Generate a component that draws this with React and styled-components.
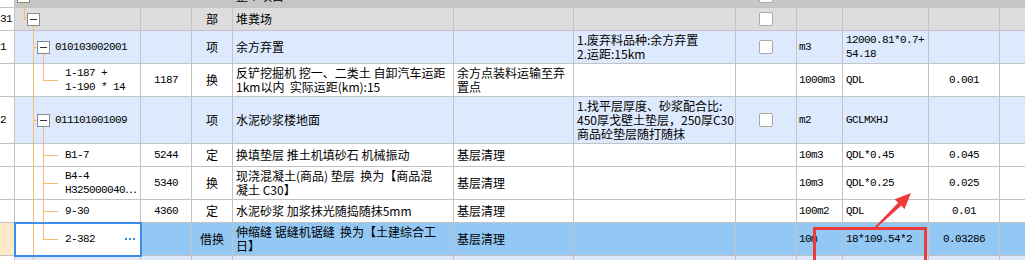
import React from 'react';
import styled, { css, createGlobalStyle } from 'styled-components';

const GlobalStyle = createGlobalStyle`
  html, body {
    margin: 0;
    padding: 0;
    background: #fff;
  }
  body {
    overflow: hidden;
  }
`;

const ORANGE = '#f5bd74';
const LINE = '#c3c3c3';
const COLS = '15px 126px 51px 41px 221px 120px 162px 61px 46px 86px 71px 80px';

const tones = {
  top: '#c6c6c6',
  group: '#dddddd',
  item: '#dde9fc',
  plain: '#ffffff',
  selected: '#93c8f5',
};

// 树形连接线，坐标相对编码单元格左边
const full = x => `linear-gradient(${ORANGE},${ORANGE}) ${x}px 0 / 1px 100% no-repeat`;
const upper = x => `linear-gradient(${ORANGE},${ORANGE}) ${x}px 0 / 1px 50% no-repeat`;
const lower = x => `linear-gradient(${ORANGE},${ORANGE}) ${x}px 100% / 1px 50% no-repeat`;
const elbow = (x, w) => `linear-gradient(${ORANGE},${ORANGE}) ${x}px 50% / ${w}px 1px no-repeat`;

const trees = {
  top: { bg: [lower(8)], indent: 2 },
  group: { bg: [upper(9), elbow(9, 3), lower(18)], indent: 12 },
  item: { bg: [full(18), elbow(18, 4), lower(28)], indent: 22 },
  child: { bg: [full(18), full(28), elbow(28, 15)], indent: 50 },
  last: { bg: [full(18), upper(28), elbow(28, 15)], indent: 50 },
  next: { bg: [full(18)], indent: 50 },
};

const mono = css`
  font-family: "Liberation Mono", "Noto Sans CJK SC", monospace;
  font-size: 11px;
  letter-spacing: -0.6px;
`;

const Viewport = styled.div`
  position: relative;
  width: 1025px;
  height: 260px;
  overflow: hidden;
`;

const Grid = styled.div`
  margin-top: -15px;
  font-family: "Noto Sans CJK SC", sans-serif;
  font-size: 12px;
  line-height: 14px;
  color: #000;
`;

const Row = styled.div`
  display: grid;
  grid-template-columns: ${COLS};
  height: ${p => p.$h}px;
  background: ${p => tones[p.$tone]};
`;

const Cell = styled.div`
  box-sizing: border-box;
  display: flex;
  align-items: ${p => (p.$top ? 'flex-start' : 'center')};
  justify-content: ${p => (p.$center ? 'center' : 'flex-start')};
  padding: ${p => (p.$top ? '3px' : '0')} ${p => p.$pad ?? 3}px 0;
  border-right: 1px solid ${LINE};
  border-bottom: 1px solid ${LINE};
  overflow: hidden;
  white-space: pre;
  ${p => p.$mono && mono}
`;

const NumCell = styled(Cell)`
  ${mono}
  padding: 0;
  background: ${p => (p.$active ? '#fde8c8' : '#fff')};
`;

const CodeCell = styled(Cell)`
  ${mono}
  gap: 5px;
  padding: 0 0 0 ${p => trees[p.$tree].indent}px;
  background: ${p => trees[p.$tree].bg.join(', ')};
  background-color: ${p => (p.$active ? '#fff' : 'transparent')};
  ${p => p.$active && css`
    position: relative;
    z-index: 1;
    outline: 2px solid #3b8fea;
    outline-offset: -1px;
  `}
`;

const Text = styled.span`
  display: block;
  white-space: pre;
`;

const Toggle = styled.span`
  box-sizing: border-box;
  flex: none;
  width: 13px;
  height: 13px;
  border: 1px solid #8a8a8a;
  background: #fff;
  display: flex;
  align-items: center;
  justify-content: center;

  &::after {
    content: '';
    width: 7px;
    height: 1px;
    background: #333;
  }
`;

const Check = styled.span`
  box-sizing: border-box;
  width: 14px;
  height: 14px;
  border: 1px solid #a9a9a9;
  border-radius: 2px;
  background: #fff;
`;

const More = styled.span`
  flex: none;
  margin-left: auto;
  margin-right: 13px;
  width: 2px;
  height: 2px;
  background: #3a87d8;
  box-shadow: 4px 0 #3a87d8, 8px 0 #3a87d8;
`;

const Overlay = styled.svg`
  position: absolute;
  top: 0;
  left: 0;
  pointer-events: none;
`;

const rows = [
  { tone: 'top', h: 23, tree: 'top', name: '整个项目', check: true },
  { tone: 'group', h: 23, num: '31', tree: 'group', type: '部', name: '堆粪场', check: true },
  {
    tone: 'item', h: 33, num: '1', tree: 'item', code: '010103002001', type: '项', name: '余方弃置',
    feature: ['1.废弃料品种:余方弃置', '2.运距:15km'], check: true, unit: 'm3', expr: ['12000.81*0.7+', '54.18'],
  },
  {
    tone: 'plain', h: 33, tree: 'last', code: ['1-187 +', '1-190 * 14'], no: '1187', type: '换',
    name: ['反铲挖掘机 挖一、二类土 自卸汽车运距', '1km以内  实际运距(km):15'],
    remark: ['余方点装料运输至弃', '置点'], unit: '1000m3', expr: 'QDL', qty: '0.001',
  },
  {
    tone: 'item', h: 47, num: '2', tree: 'item', code: '011101001009', type: '项', name: '水泥砂浆楼地面',
    feature: ['1.找平层厚度、砂浆配合比:', '450厚戈壁土垫层，250厚C30', '商品砼垫层随打随抹'],
    check: true, unit: 'm2', expr: 'GCLMXHJ',
  },
  {
    tone: 'plain', h: 23, tree: 'child', code: 'B1-7', no: '5244', type: '定', name: '换填垫层 推土机填砂石 机械振动',
    remark: '基层清理', unit: '10m3', expr: 'QDL*0.45', qty: '0.045',
  },
  {
    tone: 'plain', h: 33, tree: 'child', code: ['B4-4', 'H325000040⋯'], no: '5340', type: '换',
    name: ['现浇混凝土(商品) 垫层  换为【商品混', '凝土 C30】'], remark: '基层清理', unit: '10m3', expr: 'QDL*0.25', qty: '0.025',
  },
  {
    tone: 'plain', h: 23, tree: 'child', code: '9-30', no: '4360', type: '定', name: '水泥砂浆 加浆抹光随捣随抹5mm',
    remark: '基层清理', unit: '100m2', expr: 'QDL', qty: '0.01',
  },
  {
    tone: 'selected', h: 33, tree: 'last', code: '2-382', active: true, type: '借换',
    name: ['伸缩缝 锯缝机锯缝  换为【土建综合工', '日】'], remark: '基层清理', unit: '10m', expr: '18*109.54*2', qty: '0.03286',
  },
  { tone: 'item', h: 33, tree: 'next', feature: ['1.材料品种、规格、强度等级:', '2.部位:地面'], featureTop: true },
];

function Lines({ value }) {
  if (value == null) return null;
  const list = Array.isArray(value) ? value : [value];
  return (
    <Text>
      {list.map((line, i) => (
        <React.Fragment key={i}>
          {i > 0 && <br />}
          {line}
        </React.Fragment>
      ))}
    </Text>
  );
}

function BillRow({ row }) {
  const hasToggle = row.tree === 'top' || row.tree === 'group' || row.tree === 'item';
  return (
    <Row $h={row.h} $tone={row.tone}>
      <NumCell $active={row.active}>{row.num}</NumCell>
      <CodeCell $tree={row.tree} $active={row.active}>
        {hasToggle && <Toggle />}
        <Lines value={row.code} />
        {row.active && <More />}
      </CodeCell>
      <Cell $mono $center>{row.no}</Cell>
      <Cell $center>{row.type}</Cell>
      <Cell><Lines value={row.name} /></Cell>
      <Cell><Lines value={row.remark} /></Cell>
      <Cell $top={row.featureTop}><Lines value={row.feature} /></Cell>
      <Cell $center>{row.check && <Check />}</Cell>
      <Cell $mono $pad={2}>{row.unit}</Cell>
      <Cell $mono><Lines value={row.expr} /></Cell>
      <Cell $mono $center>{row.qty}</Cell>
      <Cell />
    </Row>
  );
}

export default function App() {
  return (
    <>
      <GlobalStyle />
      <Viewport>
        <Grid>
          {rows.map((row, i) => (
            <BillRow key={i} row={row} />
          ))}
        </Grid>
        <Overlay width="1025" height="260" viewBox="0 0 1025 260">
          <rect x="814.5" y="228.5" width="111" height="60" fill="none" stroke="#ef3a3a" strokeWidth="3" />
          <polygon
            points="873.4,228.4 898.1,202.8 894.6,199.2 911,193 904.4,209.2 901.4,205.6 874.6,229.6"
            fill="#ef3a3a"
          />
        </Overlay>
      </Viewport>
    </>
  );
}
